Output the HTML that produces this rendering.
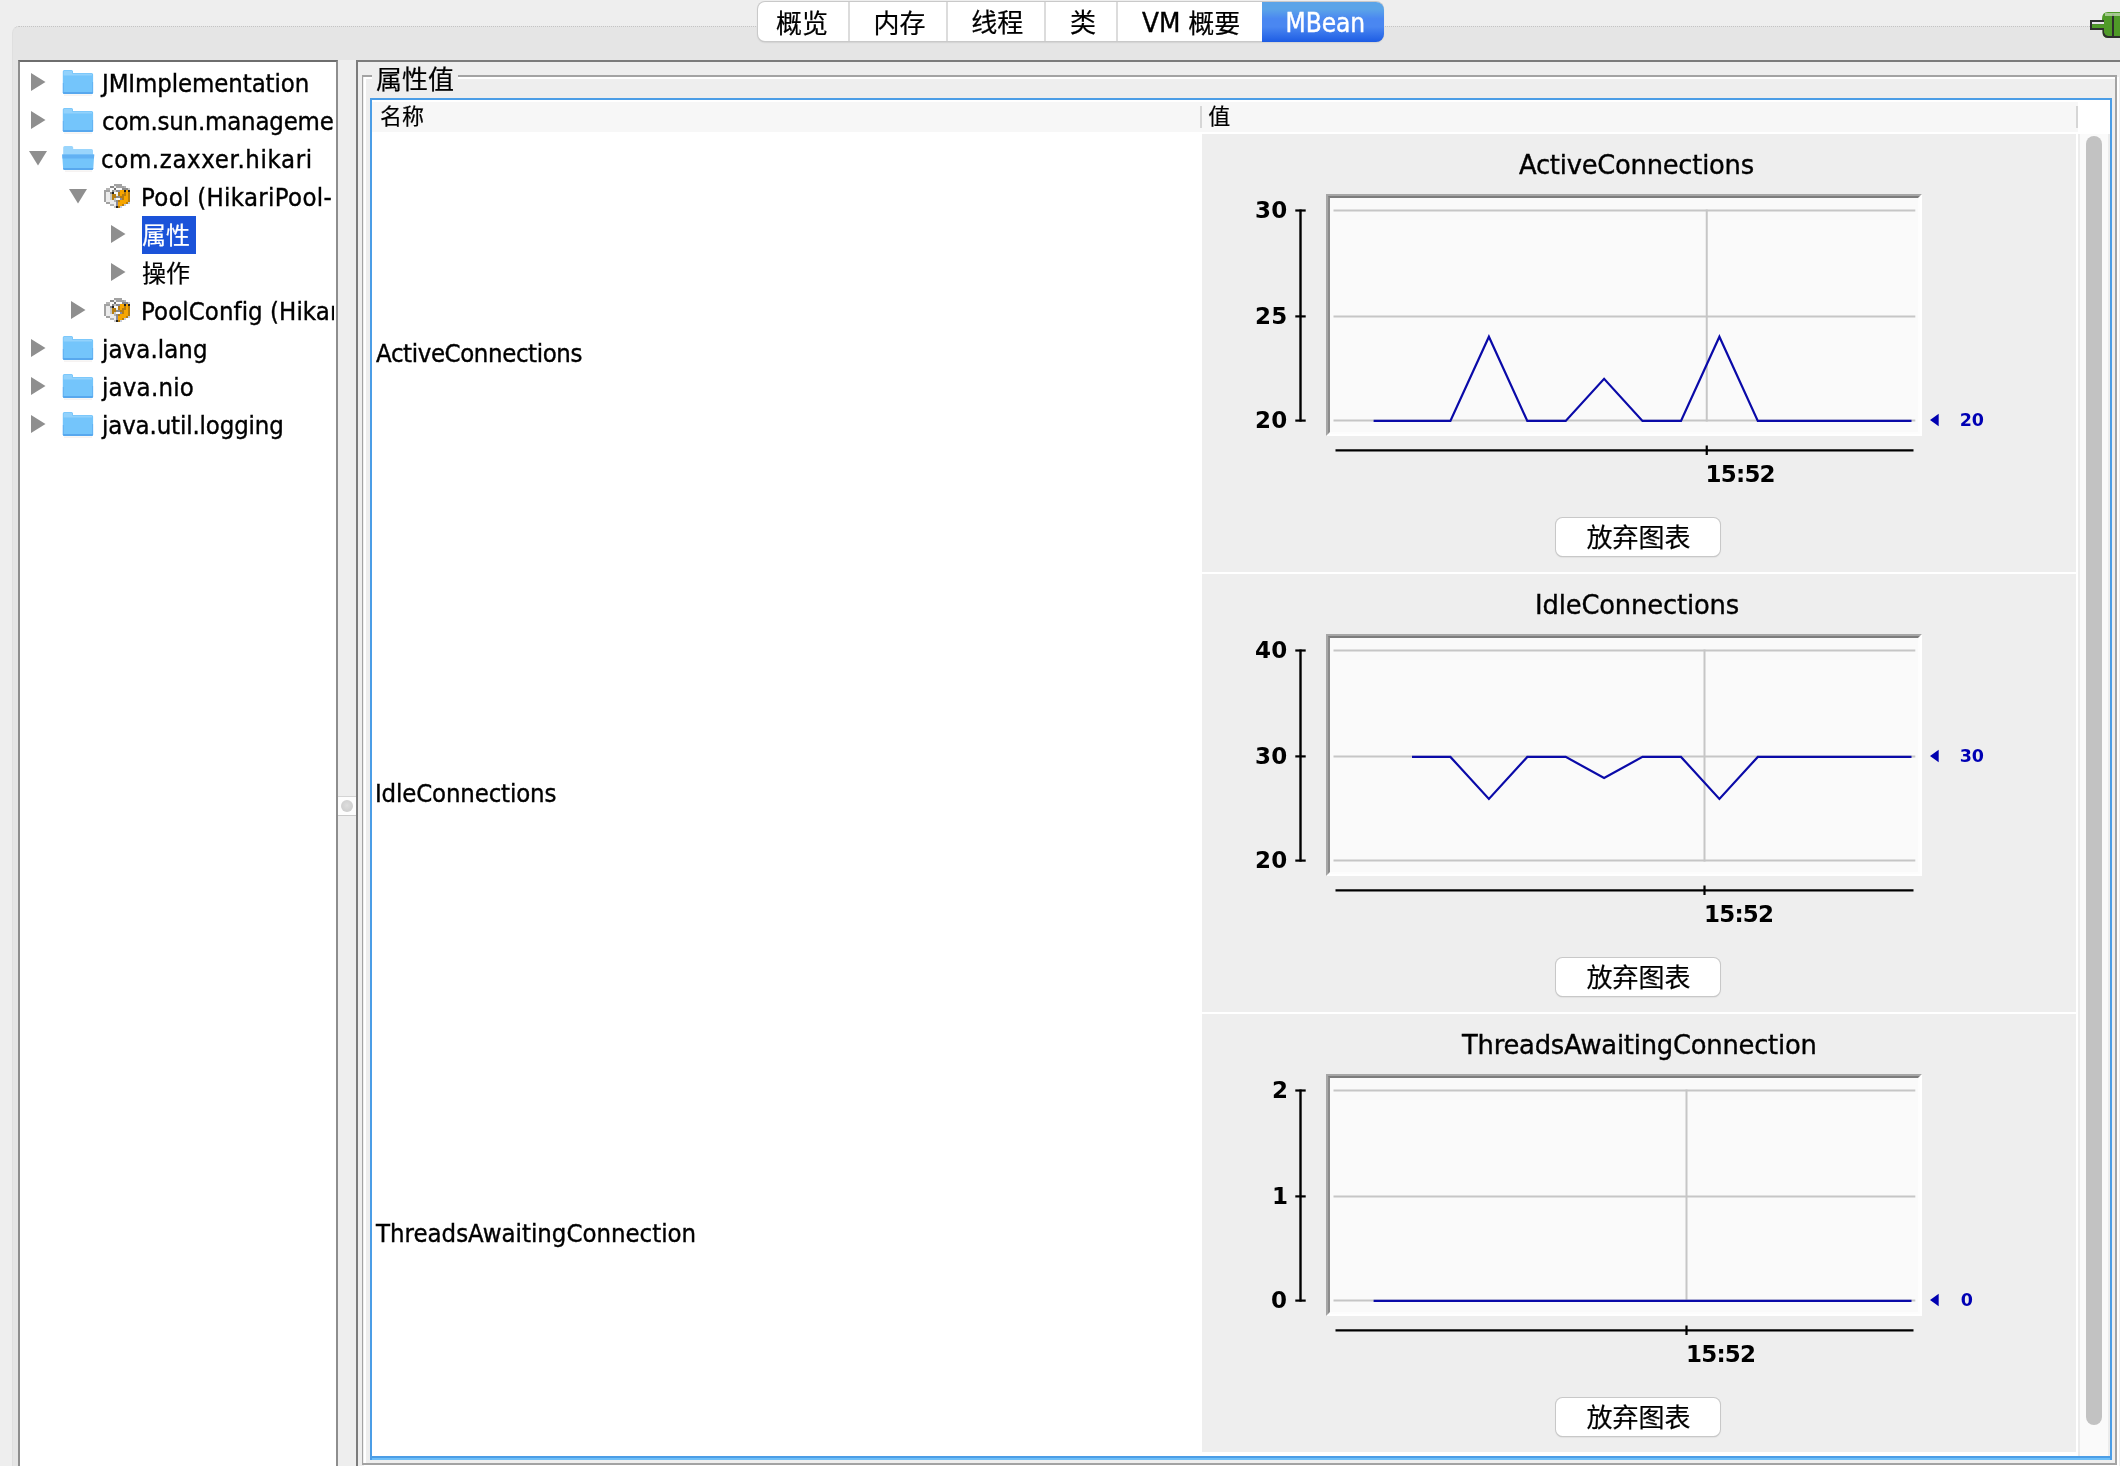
<!DOCTYPE html>
<html lang="zh-CN"><head><meta charset="utf-8"><title>JConsole MBean</title>
<style>
*{box-sizing:border-box;margin:0;padding:0}
html,body{width:2120px;height:1466px;overflow:hidden;background:#eeeeee}
body{position:relative;font-family:"DejaVu Sans","Liberation Sans","Noto Sans CJK SC","WenQuanYi Zen Hei",sans-serif;font-size:26px;color:#000}
.abs{position:absolute}
#app{position:absolute;left:0;top:0;width:2120px;height:1466px;overflow:hidden;will-change:transform}
#panel{left:12px;top:26px;width:2200px;height:1500px;background:#e5e5e5;border-top-left-radius:7px;border-top:1px dotted #c4c4c4;border-left:1px solid #dfdfdf}
#tabs{left:758px;top:2px;width:625px;height:39px;background:#fff;border-radius:7px;box-shadow:0 0 0 1px #c9c9c9,0 1px 2px rgba(0,0,0,.25);overflow:hidden}
#tabs div{position:absolute;top:0;height:39px;border-left:2px solid #dcdcdc}
#tabsel{left:1262px;top:2px;width:121.5px;height:40px;border-radius:0 8px 8px 0;background:linear-gradient(#5ba4e8 0,#5ba4e8 18%,#4a87f1 42%,#4a87f1 62%,#1d5ce4 100%)}
#tree{left:18px;top:60px;width:320px;height:1500px;background:#fff;border:2px solid #8e8e8e;border-top-color:#6e6e6e;overflow:hidden}
.row{position:absolute;left:0;width:316px;height:38px}
.row .selbox{position:absolute;top:0;height:38px;background:#1b53d9}
#treeclip{left:20px;top:62px;width:314px;height:1420px;overflow:hidden}
.t{position:absolute;height:40px;line-height:40px;white-space:pre;-webkit-text-stroke:0.4px currentColor}
.bm{display:inline-block;width:0;height:0}
.row svg{position:absolute}
#split{left:338px;top:60px;width:18px;height:1500px;background:#eeeeee}
#right{left:356px;top:60px;width:1900px;height:1500px;background:#eeeeee;border:2px solid #7c7c7c}
.etch{border:2px solid #a3a3a3;border-left-width:1.2px}
.etchw{border:2px solid #fff}
#ttl{left:372px;top:70px;width:86px;height:14px;background:#eeeeee}
#tbl{left:370px;top:98px;width:1742px;height:1362px;border:2px solid #4b9de6;border-bottom:none;background:linear-gradient(#fff 0,#fff 1356px,#4b9de6 1356px,#4b9de6 1358px,#6cbef8 1358px,#6cbef8 1360px);}
#hdr{left:372px;top:102px;width:1706px;height:30px;background:#f7f7f7}
.hsep{width:2px;height:22px;top:106px;background:#d6d6d6}
.cell{left:1202px;width:874px;height:438px;background:#eeeeee}
#sbt{left:2078px;top:134px;width:32px;height:1322px;background:#fafafa;border-left:2px solid #ececec;border-right:2px solid #ececec}
#sbh{left:2086px;top:136px;width:16px;height:1289px;border-radius:8px;background:#c2c2c2}
.btn{left:1556px;width:164px;height:38px;background:#fff;border-radius:6.5px;box-shadow:0 0 0 1px #c8c8c8,0 1px 1.5px rgba(0,0,0,.25)}
.plot{left:1325.5px;width:596px;height:242px;background:#fdfdfd;border-top:2px solid #a6a6a6;border-left:2px solid #a6a6a6;border-right:2px solid #fff;border-bottom:2px solid #fff}
.plot div{width:100%;height:100%;background:#fafafa;border-top:2px solid #7c7c7c;border-left:2px solid #8c8c8c;border-right:2px solid #fdfdfd;border-bottom:2px solid #fdfdfd}
svg.ch{position:absolute;left:1202px;overflow:visible}
</style></head><body><div id="app">
<div id="panel" class="abs"></div>
<div id="tabs" class="abs"><div style="left:0px;width:90px;border-left:none"></div><div style="left:90px;width:98px"></div><div style="left:188px;width:98px"></div><div style="left:286px;width:72px"></div><div style="left:358px;width:146px"></div></div><div id="tabsel" class="abs"></div><div class="t" id="tb0" style="left:776.00px;top:3.75px;font-size:26px;-webkit-text-stroke:0.2px currentColor">概览</div><div class="t" id="tb1" style="left:873.60px;top:3.75px;font-size:26px;-webkit-text-stroke:0.2px currentColor">内存</div><div class="t" id="tb2" style="left:971.20px;top:3.00px;font-size:26px;-webkit-text-stroke:0.2px currentColor">线程</div><div class="t" id="tb3" style="left:1070.10px;top:3.40px;font-size:26px;-webkit-text-stroke:0.2px currentColor">类</div><div class="t" id="tb4" style="left:1142.20px;top:2.50px;font-size:26px;transform:scaleX(0.955);transform-origin:0 0">VM</div><div class="t" id="tb5" style="left:1188.30px;top:3.75px;font-size:26px;-webkit-text-stroke:0.2px currentColor">概要</div><div class="t" id="tb6" style="left:1285.60px;top:2.81px;font-size:26px;letter-spacing:-0.100px;color:#fff;font-family:'DejaVu Sans Condensed','DejaVu Sans','Liberation Sans','Noto Sans CJK SC',sans-serif">MBean</div>
<svg class="abs" style="left:2088px;top:10px" width="32" height="30" viewBox="0 0 32 30"><rect x="2" y="10" width="15" height="10" fill="#2e2e2e"/><rect x="4" y="12" width="13" height="2.2" fill="#e8e2ec"/><rect x="4" y="14.2" width="13" height="3.8" fill="#4f9a28"/><path d="M14 9 Q14 2 20 2 L32 2 L32 28 L20 28 Q14.5 28 14.5 22 L14.5 20 L16 20 L16 10 L14 10 Z" fill="#4f9a28"/><path d="M16 20 L14.6 20 L14.6 23 Q15 27.4 20 28 L32 28 L32 26 L20 26 Q17 25.6 16 22.5 Z" fill="#2e2e2e"/><rect x="24" y="4" width="2" height="24" fill="#2e2e2e"/><rect x="17" y="3" width="15" height="3" fill="#b9d4a8" opacity=".8"/></svg>
<div id="tree" class="abs"></div>
<div id="treeclip" class="abs">
<div class="row" style="top:2px"><svg style="left:11px;top:9px" width="15" height="18" viewBox="0 0 15 18"><path d="M0 0 L14.5 9 L0 18 Z" fill="#8f8f8f"/></svg><svg style="left:42px;top:6px" width="32" height="26" viewBox="0 0 32 26"><path d="M0.8 1.6 Q0.8 0 2.4 0 L9.4 0 Q11 0 11 1.6 L11 3 L29.6 3 Q31.1 3 31.1 4.6 L31.1 22.4 Q31.1 24 29.6 24 L2.4 24 Q0.8 24 0.8 22.4 Z" fill="#74c5fb"/><path d="M1.6 1.8 Q1.6 0.8 2.6 0.8 L9.2 0.8 Q10.2 0.8 10.2 1.8 L10.2 3.8 L30 3.8 L30 5.4 L1.6 5.4 Z" fill="#92d2fc"/><path d="M0.8 22 L31.1 22 L31.1 22.4 Q31.1 24 29.6 24 L2.4 24 Q0.8 24 0.8 22.4 Z" fill="#58a8ee"/><rect x="0.8" y="13" width="1" height="9" fill="#5aa9ef" opacity=".7"/><rect x="30.1" y="12" width="1" height="10" fill="#5aa9ef" opacity=".7"/><rect x="2" y="24.6" width="28" height="1" fill="#e9e4e0" opacity=".7"/></svg></div><div class="t" id="tr0" style="left:82.00px;top:2.00px;font-size:24px;letter-spacing:-0.090px;transform:scaleX(0.955);transform-origin:0 0">JMImplementation</div>
<div class="row" style="top:40px"><svg style="left:11px;top:9px" width="15" height="18" viewBox="0 0 15 18"><path d="M0 0 L14.5 9 L0 18 Z" fill="#8f8f8f"/></svg><svg style="left:42px;top:6px" width="32" height="26" viewBox="0 0 32 26"><path d="M0.8 1.6 Q0.8 0 2.4 0 L9.4 0 Q11 0 11 1.6 L11 3 L29.6 3 Q31.1 3 31.1 4.6 L31.1 22.4 Q31.1 24 29.6 24 L2.4 24 Q0.8 24 0.8 22.4 Z" fill="#74c5fb"/><path d="M1.6 1.8 Q1.6 0.8 2.6 0.8 L9.2 0.8 Q10.2 0.8 10.2 1.8 L10.2 3.8 L30 3.8 L30 5.4 L1.6 5.4 Z" fill="#92d2fc"/><path d="M0.8 22 L31.1 22 L31.1 22.4 Q31.1 24 29.6 24 L2.4 24 Q0.8 24 0.8 22.4 Z" fill="#58a8ee"/><rect x="0.8" y="13" width="1" height="9" fill="#5aa9ef" opacity=".7"/><rect x="30.1" y="12" width="1" height="10" fill="#5aa9ef" opacity=".7"/><rect x="2" y="24.6" width="28" height="1" fill="#e9e4e0" opacity=".7"/></svg></div><div class="t" id="tr1" style="left:81.80px;top:40.00px;font-size:24px;letter-spacing:-0.190px;transform:scaleX(0.955);transform-origin:0 0">com.sun.management</div>
<div class="row" style="top:78px"><svg style="left:9px;top:11px" width="18" height="15" viewBox="0 0 18 15"><path d="M0 0 L18 0 L9 14.5 Z" fill="#8f8f8f"/></svg><svg style="left:42px;top:6px" width="34" height="26" viewBox="0 0 34 26"><path d="M1.2 1.6 Q1.2 0 2.8 0 L9.6 0 Q11.2 0 11.2 1.6 L11.2 3 L29.4 3 Q31 3 31 4.6 L31 12 L1.2 12 Z" fill="#9ad5fc"/><path d="M0.2 8.6 L32.2 8.6 L31.3 22.4 Q31.2 24 29.6 24 L2.8 24 Q1.2 24 1.1 22.4 Z" fill="#74c5fb"/><path d="M0.2 8.6 L32.2 8.6 L31.95 12.6 L0.45 12.6 Z" fill="#62b1f3"/><path d="M1.0 22 L31.35 22 L31.3 22.4 Q31.2 24 29.6 24 L2.8 24 Q1.2 24 1.1 22.4 Z" fill="#58a8ee"/><rect x="3" y="24.6" width="27" height="1" fill="#e9e4e0" opacity=".7"/></svg></div><div class="t" id="tr2" style="left:81.20px;top:78.00px;font-size:24px;letter-spacing:0.660px;transform:scaleX(0.955);transform-origin:0 0">com.zaxxer.hikari</div>
<div class="row" style="top:116px"><svg style="left:49px;top:11px" width="18" height="15" viewBox="0 0 18 15"><path d="M0 0 L18 0 L9 14.5 Z" fill="#8f8f8f"/></svg><svg style="left:84px;top:6px" width="26" height="24" viewBox="0 0 13 12" shape-rendering="crispEdges"><rect x="5" y="0" width="4" height="1" fill="#a2a2a2"/><rect x="3" y="1" width="2" height="1" fill="#8a8a8a"/><rect x="5" y="1" width="1" height="1" fill="#ececec"/><rect x="6" y="1" width="4" height="1" fill="#a2a2a2"/><rect x="10" y="1" width="1" height="1" fill="#b4b4b4"/><rect x="1" y="2" width="2" height="1" fill="#b4b4b4"/><rect x="3" y="2" width="2" height="1" fill="#fafafa"/><rect x="5" y="2" width="1" height="1" fill="#707070"/><rect x="6" y="2" width="3" height="1" fill="#fafafa"/><rect x="9" y="2" width="3" height="1" fill="#8a8a8a"/><rect x="12" y="2" width="1" height="1" fill="#c8c8c8"/><rect x="0" y="3" width="3" height="1" fill="#a2a2a2"/><rect x="3" y="3" width="1" height="1" fill="#fafafa"/><rect x="4" y="3" width="1" height="1" fill="#8a8a8a"/><rect x="5" y="3" width="1" height="1" fill="#c8c8c8"/><rect x="6" y="3" width="1" height="1" fill="#8a8a8a"/><rect x="7" y="3" width="1" height="1" fill="#8a8a9c"/><rect x="8" y="3" width="2" height="1" fill="#f7a600"/><rect x="10" y="3" width="1" height="1" fill="#222222"/><rect x="11" y="3" width="1" height="1" fill="#f7a600"/><rect x="12" y="3" width="1" height="1" fill="#222222"/><rect x="0" y="4" width="1" height="1" fill="#a2a2a2"/><rect x="1" y="4" width="2" height="1" fill="#ececec"/><rect x="3" y="4" width="1" height="1" fill="#8a8a8a"/><rect x="4" y="4" width="1" height="1" fill="#222222"/><rect x="5" y="4" width="2" height="1" fill="#fafafa"/><rect x="7" y="4" width="1" height="1" fill="#b67d10"/><rect x="8" y="4" width="2" height="1" fill="#f7a600"/><rect x="10" y="4" width="1" height="1" fill="#b67d10"/><rect x="11" y="4" width="1" height="1" fill="#f7a600"/><rect x="12" y="4" width="1" height="1" fill="#b67d10"/><rect x="0" y="5" width="1" height="1" fill="#a2a2a2"/><rect x="1" y="5" width="2" height="1" fill="#ececec"/><rect x="3" y="5" width="1" height="1" fill="#c8c8c8"/><rect x="4" y="5" width="2" height="1" fill="#b67d10"/><rect x="6" y="5" width="1" height="1" fill="#ececec"/><rect x="7" y="5" width="1" height="1" fill="#b67d10"/><rect x="8" y="5" width="1" height="1" fill="#f7a600"/><rect x="9" y="5" width="2" height="1" fill="#b67d10"/><rect x="11" y="5" width="1" height="1" fill="#f7a600"/><rect x="12" y="5" width="1" height="1" fill="#b67d10"/><rect x="0" y="6" width="1" height="1" fill="#a2a2a2"/><rect x="1" y="6" width="2" height="1" fill="#ececec"/><rect x="3" y="6" width="1" height="1" fill="#c8c8c8"/><rect x="4" y="6" width="2" height="1" fill="#b67d10"/><rect x="6" y="6" width="2" height="1" fill="#8a8a8a"/><rect x="8" y="6" width="2" height="1" fill="#b67d10"/><rect x="10" y="6" width="2" height="1" fill="#f7a600"/><rect x="12" y="6" width="1" height="1" fill="#b67d10"/><rect x="0" y="7" width="1" height="1" fill="#a2a2a2"/><rect x="1" y="7" width="2" height="1" fill="#ececec"/><rect x="3" y="7" width="1" height="1" fill="#c8c8c8"/><rect x="4" y="7" width="1" height="1" fill="#b67d10"/><rect x="5" y="7" width="1" height="1" fill="#c8c8c8"/><rect x="6" y="7" width="2" height="1" fill="#fafafa"/><rect x="8" y="7" width="1" height="1" fill="#8a8a9c"/><rect x="9" y="7" width="1" height="1" fill="#b67d10"/><rect x="10" y="7" width="2" height="1" fill="#f7a600"/><rect x="12" y="7" width="1" height="1" fill="#b67d10"/><rect x="0" y="8" width="1" height="1" fill="#a2a2a2"/><rect x="1" y="8" width="4" height="1" fill="#ececec"/><rect x="5" y="8" width="1" height="1" fill="#b4b4b4"/><rect x="6" y="8" width="1" height="1" fill="#8a8a8a"/><rect x="7" y="8" width="1" height="1" fill="#b67d10"/><rect x="8" y="8" width="4" height="1" fill="#f7a600"/><rect x="12" y="8" width="1" height="1" fill="#b67d10"/><rect x="1" y="9" width="2" height="1" fill="#a2a2a2"/><rect x="3" y="9" width="3" height="1" fill="#ececec"/><rect x="6" y="9" width="1" height="1" fill="#8a8a9c"/><rect x="7" y="9" width="4" height="1" fill="#f7a600"/><rect x="11" y="9" width="1" height="1" fill="#b67d10"/><rect x="12" y="9" width="1" height="1" fill="#c6cede"/><rect x="3" y="10" width="2" height="1" fill="#b4b4b4"/><rect x="5" y="10" width="1" height="1" fill="#ececec"/><rect x="6" y="10" width="1" height="1" fill="#8a8a9c"/><rect x="7" y="10" width="2" height="1" fill="#f7a600"/><rect x="9" y="10" width="1" height="1" fill="#b67d10"/><rect x="10" y="10" width="1" height="1" fill="#c6cede"/><rect x="5" y="11" width="1" height="1" fill="#c8c8c8"/><rect x="6" y="11" width="1" height="1" fill="#222222"/><rect x="7" y="11" width="1" height="1" fill="#b67d10"/><rect x="8" y="11" width="1" height="1" fill="#c6cede"/></svg></div><div class="t" id="tr3" style="left:120.80px;top:116.00px;font-size:24px;letter-spacing:0.330px;transform:scaleX(0.955);transform-origin:0 0">Pool (HikariPool-1)</div>
<div class="row" style="top:154px"><svg style="left:91px;top:9px" width="15" height="18" viewBox="0 0 15 18"><path d="M0 0 L14.5 9 L0 18 Z" fill="#8f8f8f"/></svg><div class="selbox" style="left:122px;width:54px"></div></div><div class="t" id="tr4" style="left:122.00px;top:153.50px;font-size:24px;color:#fff;-webkit-text-stroke:0.2px currentColor">属性</div>
<div class="row" style="top:192px"><svg style="left:91px;top:9px" width="15" height="18" viewBox="0 0 15 18"><path d="M0 0 L14.5 9 L0 18 Z" fill="#8f8f8f"/></svg></div><div class="t" id="tr5" style="left:122.00px;top:191.50px;font-size:24px;-webkit-text-stroke:0.2px currentColor">操作</div>
<div class="row" style="top:230px"><svg style="left:51px;top:9px" width="15" height="18" viewBox="0 0 15 18"><path d="M0 0 L14.5 9 L0 18 Z" fill="#8f8f8f"/></svg><svg style="left:84px;top:6px" width="26" height="24" viewBox="0 0 13 12" shape-rendering="crispEdges"><rect x="5" y="0" width="4" height="1" fill="#a2a2a2"/><rect x="3" y="1" width="2" height="1" fill="#8a8a8a"/><rect x="5" y="1" width="1" height="1" fill="#ececec"/><rect x="6" y="1" width="4" height="1" fill="#a2a2a2"/><rect x="10" y="1" width="1" height="1" fill="#b4b4b4"/><rect x="1" y="2" width="2" height="1" fill="#b4b4b4"/><rect x="3" y="2" width="2" height="1" fill="#fafafa"/><rect x="5" y="2" width="1" height="1" fill="#707070"/><rect x="6" y="2" width="3" height="1" fill="#fafafa"/><rect x="9" y="2" width="3" height="1" fill="#8a8a8a"/><rect x="12" y="2" width="1" height="1" fill="#c8c8c8"/><rect x="0" y="3" width="3" height="1" fill="#a2a2a2"/><rect x="3" y="3" width="1" height="1" fill="#fafafa"/><rect x="4" y="3" width="1" height="1" fill="#8a8a8a"/><rect x="5" y="3" width="1" height="1" fill="#c8c8c8"/><rect x="6" y="3" width="1" height="1" fill="#8a8a8a"/><rect x="7" y="3" width="1" height="1" fill="#8a8a9c"/><rect x="8" y="3" width="2" height="1" fill="#f7a600"/><rect x="10" y="3" width="1" height="1" fill="#222222"/><rect x="11" y="3" width="1" height="1" fill="#f7a600"/><rect x="12" y="3" width="1" height="1" fill="#222222"/><rect x="0" y="4" width="1" height="1" fill="#a2a2a2"/><rect x="1" y="4" width="2" height="1" fill="#ececec"/><rect x="3" y="4" width="1" height="1" fill="#8a8a8a"/><rect x="4" y="4" width="1" height="1" fill="#222222"/><rect x="5" y="4" width="2" height="1" fill="#fafafa"/><rect x="7" y="4" width="1" height="1" fill="#b67d10"/><rect x="8" y="4" width="2" height="1" fill="#f7a600"/><rect x="10" y="4" width="1" height="1" fill="#b67d10"/><rect x="11" y="4" width="1" height="1" fill="#f7a600"/><rect x="12" y="4" width="1" height="1" fill="#b67d10"/><rect x="0" y="5" width="1" height="1" fill="#a2a2a2"/><rect x="1" y="5" width="2" height="1" fill="#ececec"/><rect x="3" y="5" width="1" height="1" fill="#c8c8c8"/><rect x="4" y="5" width="2" height="1" fill="#b67d10"/><rect x="6" y="5" width="1" height="1" fill="#ececec"/><rect x="7" y="5" width="1" height="1" fill="#b67d10"/><rect x="8" y="5" width="1" height="1" fill="#f7a600"/><rect x="9" y="5" width="2" height="1" fill="#b67d10"/><rect x="11" y="5" width="1" height="1" fill="#f7a600"/><rect x="12" y="5" width="1" height="1" fill="#b67d10"/><rect x="0" y="6" width="1" height="1" fill="#a2a2a2"/><rect x="1" y="6" width="2" height="1" fill="#ececec"/><rect x="3" y="6" width="1" height="1" fill="#c8c8c8"/><rect x="4" y="6" width="2" height="1" fill="#b67d10"/><rect x="6" y="6" width="2" height="1" fill="#8a8a8a"/><rect x="8" y="6" width="2" height="1" fill="#b67d10"/><rect x="10" y="6" width="2" height="1" fill="#f7a600"/><rect x="12" y="6" width="1" height="1" fill="#b67d10"/><rect x="0" y="7" width="1" height="1" fill="#a2a2a2"/><rect x="1" y="7" width="2" height="1" fill="#ececec"/><rect x="3" y="7" width="1" height="1" fill="#c8c8c8"/><rect x="4" y="7" width="1" height="1" fill="#b67d10"/><rect x="5" y="7" width="1" height="1" fill="#c8c8c8"/><rect x="6" y="7" width="2" height="1" fill="#fafafa"/><rect x="8" y="7" width="1" height="1" fill="#8a8a9c"/><rect x="9" y="7" width="1" height="1" fill="#b67d10"/><rect x="10" y="7" width="2" height="1" fill="#f7a600"/><rect x="12" y="7" width="1" height="1" fill="#b67d10"/><rect x="0" y="8" width="1" height="1" fill="#a2a2a2"/><rect x="1" y="8" width="4" height="1" fill="#ececec"/><rect x="5" y="8" width="1" height="1" fill="#b4b4b4"/><rect x="6" y="8" width="1" height="1" fill="#8a8a8a"/><rect x="7" y="8" width="1" height="1" fill="#b67d10"/><rect x="8" y="8" width="4" height="1" fill="#f7a600"/><rect x="12" y="8" width="1" height="1" fill="#b67d10"/><rect x="1" y="9" width="2" height="1" fill="#a2a2a2"/><rect x="3" y="9" width="3" height="1" fill="#ececec"/><rect x="6" y="9" width="1" height="1" fill="#8a8a9c"/><rect x="7" y="9" width="4" height="1" fill="#f7a600"/><rect x="11" y="9" width="1" height="1" fill="#b67d10"/><rect x="12" y="9" width="1" height="1" fill="#c6cede"/><rect x="3" y="10" width="2" height="1" fill="#b4b4b4"/><rect x="5" y="10" width="1" height="1" fill="#ececec"/><rect x="6" y="10" width="1" height="1" fill="#8a8a9c"/><rect x="7" y="10" width="2" height="1" fill="#f7a600"/><rect x="9" y="10" width="1" height="1" fill="#b67d10"/><rect x="10" y="10" width="1" height="1" fill="#c6cede"/><rect x="5" y="11" width="1" height="1" fill="#c8c8c8"/><rect x="6" y="11" width="1" height="1" fill="#222222"/><rect x="7" y="11" width="1" height="1" fill="#b67d10"/><rect x="8" y="11" width="1" height="1" fill="#c6cede"/></svg></div><div class="t" id="tr6" style="left:120.80px;top:230.00px;font-size:24px;letter-spacing:0.080px;transform:scaleX(0.955);transform-origin:0 0">PoolConfig (HikariPool-1)</div>
<div class="row" style="top:268px"><svg style="left:11px;top:9px" width="15" height="18" viewBox="0 0 15 18"><path d="M0 0 L14.5 9 L0 18 Z" fill="#8f8f8f"/></svg><svg style="left:42px;top:6px" width="32" height="26" viewBox="0 0 32 26"><path d="M0.8 1.6 Q0.8 0 2.4 0 L9.4 0 Q11 0 11 1.6 L11 3 L29.6 3 Q31.1 3 31.1 4.6 L31.1 22.4 Q31.1 24 29.6 24 L2.4 24 Q0.8 24 0.8 22.4 Z" fill="#74c5fb"/><path d="M1.6 1.8 Q1.6 0.8 2.6 0.8 L9.2 0.8 Q10.2 0.8 10.2 1.8 L10.2 3.8 L30 3.8 L30 5.4 L1.6 5.4 Z" fill="#92d2fc"/><path d="M0.8 22 L31.1 22 L31.1 22.4 Q31.1 24 29.6 24 L2.4 24 Q0.8 24 0.8 22.4 Z" fill="#58a8ee"/><rect x="0.8" y="13" width="1" height="9" fill="#5aa9ef" opacity=".7"/><rect x="30.1" y="12" width="1" height="10" fill="#5aa9ef" opacity=".7"/><rect x="2" y="24.6" width="28" height="1" fill="#e9e4e0" opacity=".7"/></svg></div><div class="t" id="tr7" style="left:81.50px;top:268.00px;font-size:24px;letter-spacing:0.097px;transform:scaleX(0.955);transform-origin:0 0">java.lang</div>
<div class="row" style="top:306px"><svg style="left:11px;top:9px" width="15" height="18" viewBox="0 0 15 18"><path d="M0 0 L14.5 9 L0 18 Z" fill="#8f8f8f"/></svg><svg style="left:42px;top:6px" width="32" height="26" viewBox="0 0 32 26"><path d="M0.8 1.6 Q0.8 0 2.4 0 L9.4 0 Q11 0 11 1.6 L11 3 L29.6 3 Q31.1 3 31.1 4.6 L31.1 22.4 Q31.1 24 29.6 24 L2.4 24 Q0.8 24 0.8 22.4 Z" fill="#74c5fb"/><path d="M1.6 1.8 Q1.6 0.8 2.6 0.8 L9.2 0.8 Q10.2 0.8 10.2 1.8 L10.2 3.8 L30 3.8 L30 5.4 L1.6 5.4 Z" fill="#92d2fc"/><path d="M0.8 22 L31.1 22 L31.1 22.4 Q31.1 24 29.6 24 L2.4 24 Q0.8 24 0.8 22.4 Z" fill="#58a8ee"/><rect x="0.8" y="13" width="1" height="9" fill="#5aa9ef" opacity=".7"/><rect x="30.1" y="12" width="1" height="10" fill="#5aa9ef" opacity=".7"/><rect x="2" y="24.6" width="28" height="1" fill="#e9e4e0" opacity=".7"/></svg></div><div class="t" id="tr8" style="left:81.50px;top:306.00px;font-size:24px;letter-spacing:0.226px;transform:scaleX(0.955);transform-origin:0 0">java.nio</div>
<div class="row" style="top:344px"><svg style="left:11px;top:9px" width="15" height="18" viewBox="0 0 15 18"><path d="M0 0 L14.5 9 L0 18 Z" fill="#8f8f8f"/></svg><svg style="left:42px;top:6px" width="32" height="26" viewBox="0 0 32 26"><path d="M0.8 1.6 Q0.8 0 2.4 0 L9.4 0 Q11 0 11 1.6 L11 3 L29.6 3 Q31.1 3 31.1 4.6 L31.1 22.4 Q31.1 24 29.6 24 L2.4 24 Q0.8 24 0.8 22.4 Z" fill="#74c5fb"/><path d="M1.6 1.8 Q1.6 0.8 2.6 0.8 L9.2 0.8 Q10.2 0.8 10.2 1.8 L10.2 3.8 L30 3.8 L30 5.4 L1.6 5.4 Z" fill="#92d2fc"/><path d="M0.8 22 L31.1 22 L31.1 22.4 Q31.1 24 29.6 24 L2.4 24 Q0.8 24 0.8 22.4 Z" fill="#58a8ee"/><rect x="0.8" y="13" width="1" height="9" fill="#5aa9ef" opacity=".7"/><rect x="30.1" y="12" width="1" height="10" fill="#5aa9ef" opacity=".7"/><rect x="2" y="24.6" width="28" height="1" fill="#e9e4e0" opacity=".7"/></svg></div><div class="t" id="tr9" style="left:81.50px;top:344.00px;font-size:24px;letter-spacing:-0.130px;transform:scaleX(0.955);transform-origin:0 0">java.util.logging</div>
</div>
<div id="split" class="abs"><div class="abs" style="left:0;top:736px;width:18px;height:20px;background:#fdfdfd;border-top:1px solid #d4d4d4;border-bottom:1px solid #cacaca"></div><div class="abs" style="left:2.9px;top:740.1px;width:12px;height:12px;border-radius:6px;background:radial-gradient(circle at 50% 45%,#dedede 0,#d2d2d2 55%,#c9c9c9 100%)"></div></div>
<div id="right" class="abs"></div>
<div class="abs etchw" style="left:364px;top:77px;width:1755px;height:1390px"></div>
<div class="abs etch" style="left:362px;top:75px;width:1755px;height:1390px"></div>
<div id="ttl" class="abs"></div>
<div class="t" id="ttl_t" style="left:376.00px;top:59.80px;font-size:26px;-webkit-text-stroke:0.2px currentColor">属性值</div>
<div id="tbl" class="abs"></div>
<div id="hdr" class="abs"></div>
<div class="t" id="h1" style="left:380.00px;top:96.90px;font-size:22px;-webkit-text-stroke:0.2px currentColor">名称</div>
<div class="t" id="h2" style="left:1208.20px;top:97.30px;font-size:22px;-webkit-text-stroke:0.2px currentColor">值</div>
<div class="abs hsep" style="left:1200px"></div>
<div class="abs hsep" style="left:2076px"></div>
<div class="t" id="nm0" style="left:375.60px;top:334.10px;font-size:24px;letter-spacing:-0.400px;transform:scaleX(0.955);transform-origin:0 0">ActiveConnections</div>
<div class="t" id="nm1" style="left:374.70px;top:774.10px;font-size:24px;letter-spacing:-0.155px;transform:scaleX(0.955);transform-origin:0 0">IdleConnections</div>
<div class="t" id="nm2" style="left:375.90px;top:1214.10px;font-size:24px;transform:scaleX(0.955);transform-origin:0 0">ThreadsAwaitingConnection</div>
<div class="abs cell" style="top:134px"></div>
<div class="t" id="ct0" style="left:1519.20px;top:145.10px;font-size:27px;letter-spacing:-0.260px;transform:scaleX(0.955);transform-origin:0 0">ActiveConnections</div>
<div class="abs plot" style="top:193.5px"><div></div></div>
<svg class="abs" style="left:0;top:0px;overflow:visible" width="2120" height="600" viewBox="0 0 2120 600"><line x1="1333.5" x2="1915.3" y1="210.5" y2="210.5" stroke="#c6c6c6" stroke-width="2"/><line x1="1333.5" x2="1915.3" y1="316.4" y2="316.4" stroke="#c6c6c6" stroke-width="2"/><line x1="1333.5" x2="1915.3" y1="420.6" y2="420.6" stroke="#c6c6c6" stroke-width="2"/><line x1="1706.75" x2="1706.75" y1="209.5" y2="421.6" stroke="#c6c6c6" stroke-width="2"/><line x1="1300.5" x2="1300.5" y1="209.5" y2="421.6" stroke="#000" stroke-width="2.4"/><line x1="1295.3" x2="1305.7" y1="210.5" y2="210.5" stroke="#000" stroke-width="2.2"/><line x1="1295.3" x2="1305.7" y1="316.4" y2="316.4" stroke="#000" stroke-width="2.2"/><line x1="1295.3" x2="1305.7" y1="420.6" y2="420.6" stroke="#000" stroke-width="2.2"/><line x1="1335.5" x2="1913.5" y1="450.4" y2="450.4" stroke="#000" stroke-width="2.4"/><line x1="1706.75" x2="1706.75" y1="445.5" y2="455" stroke="#000" stroke-width="2.2"/><polyline points="1373.6,420.9 1412.0,420.9 1450.4,420.9 1488.9,336.7 1527.3,420.9 1565.7,420.9 1604.1,378.8 1642.5,420.9 1681.0,420.9 1719.4,336.7 1757.8,420.9 1796.2,420.9 1834.6,420.9 1873.1,420.9 1911.5,420.9" fill="none" stroke="#0a0aa8" stroke-width="2.2" stroke-linejoin="miter"/><path d="M1930 420.0 L1938.7 413.7 L1938.7 426.3 Z" fill="#0000b0"/></svg>
<div class="t" id="yl0_0" style="left:1255.00px;top:190.00px;font-size:23px;letter-spacing:0.300px;font-weight:bold;-webkit-text-stroke:0">30</div>
<div class="t" id="yl0_1" style="left:1255.00px;top:295.91px;font-size:23px;letter-spacing:0.300px;font-weight:bold;-webkit-text-stroke:0">25</div>
<div class="t" id="yl0_2" style="left:1255.00px;top:400.10px;font-size:23px;letter-spacing:0.300px;font-weight:bold;-webkit-text-stroke:0">20</div>
<div class="t" id="xl0" style="left:1705.60px;top:453.90px;font-size:23px;letter-spacing:-0.800px;font-weight:bold;-webkit-text-stroke:0">15:52</div>
<div class="t" id="ml0" style="left:1959.80px;top:400.25px;font-size:17.5px;letter-spacing:-0.300px;font-weight:bold;-webkit-text-stroke:0;color:#0000b4">20</div>
<div class="abs btn" style="top:518px"></div>
<div class="t" id="bt0" style="left:1586.50px;top:518.00px;font-size:26px;-webkit-text-stroke:0.2px currentColor">放弃图表</div>
<div class="abs cell" style="top:574px"></div>
<div class="t" id="ct1" style="left:1534.60px;top:585.10px;font-size:27px;letter-spacing:-0.160px;transform:scaleX(0.955);transform-origin:0 0">IdleConnections</div>
<div class="abs plot" style="top:633.5px"><div></div></div>
<svg class="abs" style="left:0;top:440px;overflow:visible" width="2120" height="600" viewBox="0 0 2120 600"><line x1="1333.5" x2="1915.3" y1="210.5" y2="210.5" stroke="#c6c6c6" stroke-width="2"/><line x1="1333.5" x2="1915.3" y1="316.4" y2="316.4" stroke="#c6c6c6" stroke-width="2"/><line x1="1333.5" x2="1915.3" y1="420.6" y2="420.6" stroke="#c6c6c6" stroke-width="2"/><line x1="1704.5" x2="1704.5" y1="209.5" y2="421.6" stroke="#c6c6c6" stroke-width="2"/><line x1="1300.5" x2="1300.5" y1="209.5" y2="421.6" stroke="#000" stroke-width="2.4"/><line x1="1295.3" x2="1305.7" y1="210.5" y2="210.5" stroke="#000" stroke-width="2.2"/><line x1="1295.3" x2="1305.7" y1="316.4" y2="316.4" stroke="#000" stroke-width="2.2"/><line x1="1295.3" x2="1305.7" y1="420.6" y2="420.6" stroke="#000" stroke-width="2.2"/><line x1="1335.5" x2="1913.5" y1="450.4" y2="450.4" stroke="#000" stroke-width="2.4"/><line x1="1704.5" x2="1704.5" y1="445.5" y2="455" stroke="#000" stroke-width="2.2"/><polyline points="1412.0,316.9 1450.4,316.9 1488.9,358.9 1527.3,316.9 1565.7,316.9 1604.1,337.9 1642.5,316.9 1681.0,316.9 1719.4,358.9 1757.8,316.9 1796.2,316.9 1834.6,316.9 1873.1,316.9 1911.5,316.9" fill="none" stroke="#0a0aa8" stroke-width="2.2" stroke-linejoin="miter"/><path d="M1930 316.0 L1938.7 309.7 L1938.7 322.3 Z" fill="#0000b0"/></svg>
<div class="t" id="yl1_0" style="left:1255.00px;top:630.00px;font-size:23px;letter-spacing:0.300px;font-weight:bold;-webkit-text-stroke:0">40</div>
<div class="t" id="yl1_1" style="left:1255.00px;top:735.91px;font-size:23px;letter-spacing:0.300px;font-weight:bold;-webkit-text-stroke:0">30</div>
<div class="t" id="yl1_2" style="left:1255.00px;top:840.10px;font-size:23px;letter-spacing:0.300px;font-weight:bold;-webkit-text-stroke:0">20</div>
<div class="t" id="xl1" style="left:1704.00px;top:893.90px;font-size:23px;letter-spacing:-0.800px;font-weight:bold;-webkit-text-stroke:0">15:52</div>
<div class="t" id="ml1" style="left:1959.80px;top:736.25px;font-size:17.5px;letter-spacing:-0.300px;font-weight:bold;-webkit-text-stroke:0;color:#0000b4">30</div>
<div class="abs btn" style="top:958px"></div>
<div class="t" id="bt1" style="left:1586.50px;top:958.00px;font-size:26px;-webkit-text-stroke:0.2px currentColor">放弃图表</div>
<div class="abs cell" style="top:1014px"></div>
<div class="t" id="ct2" style="left:1462.20px;top:1025.10px;font-size:27px;letter-spacing:-0.230px;transform:scaleX(0.955);transform-origin:0 0">ThreadsAwaitingConnection</div>
<div class="abs plot" style="top:1073.5px"><div></div></div>
<svg class="abs" style="left:0;top:880px;overflow:visible" width="2120" height="600" viewBox="0 0 2120 600"><line x1="1333.5" x2="1915.3" y1="210.5" y2="210.5" stroke="#c6c6c6" stroke-width="2"/><line x1="1333.5" x2="1915.3" y1="316.4" y2="316.4" stroke="#c6c6c6" stroke-width="2"/><line x1="1333.5" x2="1915.3" y1="420.6" y2="420.6" stroke="#c6c6c6" stroke-width="2"/><line x1="1686.5" x2="1686.5" y1="209.5" y2="421.6" stroke="#c6c6c6" stroke-width="2"/><line x1="1300.5" x2="1300.5" y1="209.5" y2="421.6" stroke="#000" stroke-width="2.4"/><line x1="1295.3" x2="1305.7" y1="210.5" y2="210.5" stroke="#000" stroke-width="2.2"/><line x1="1295.3" x2="1305.7" y1="316.4" y2="316.4" stroke="#000" stroke-width="2.2"/><line x1="1295.3" x2="1305.7" y1="420.6" y2="420.6" stroke="#000" stroke-width="2.2"/><line x1="1335.5" x2="1913.5" y1="450.4" y2="450.4" stroke="#000" stroke-width="2.4"/><line x1="1686.5" x2="1686.5" y1="445.5" y2="455" stroke="#000" stroke-width="2.2"/><polyline points="1373.6,420.9 1911.5,420.9" fill="none" stroke="#0a0aa8" stroke-width="2.2" stroke-linejoin="miter"/><path d="M1930 420.0 L1938.7 413.7 L1938.7 426.3 Z" fill="#0000b0"/></svg>
<div class="t" id="yl2_0" style="left:1272.00px;top:1070.00px;font-size:23px;letter-spacing:0.300px;font-weight:bold;-webkit-text-stroke:0">2</div>
<div class="t" id="yl2_1" style="left:1272.00px;top:1175.91px;font-size:23px;letter-spacing:0.300px;font-weight:bold;-webkit-text-stroke:0">1</div>
<div class="t" id="yl2_2" style="left:1271.00px;top:1280.10px;font-size:23px;letter-spacing:0.300px;font-weight:bold;-webkit-text-stroke:0">0</div>
<div class="t" id="xl2" style="left:1686.00px;top:1333.90px;font-size:23px;letter-spacing:-0.800px;font-weight:bold;-webkit-text-stroke:0">15:52</div>
<div class="t" id="ml2" style="left:1960.80px;top:1280.25px;font-size:17.5px;letter-spacing:-0.300px;font-weight:bold;-webkit-text-stroke:0;color:#0000b4">0</div>
<div class="abs btn" style="top:1398px"></div>
<div class="t" id="bt2" style="left:1586.50px;top:1398.00px;font-size:26px;-webkit-text-stroke:0.2px currentColor">放弃图表</div>
<div id="sbt" class="abs"></div><div id="sbh" class="abs"></div>
</div></body></html>
